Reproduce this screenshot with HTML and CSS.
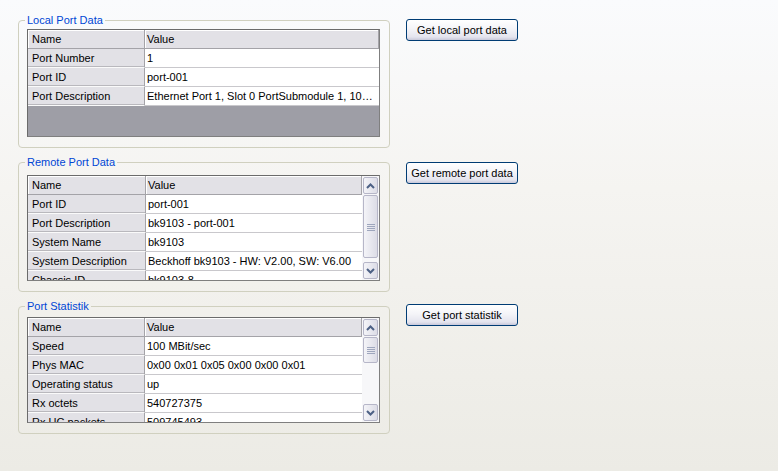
FILE: index.html
```html
<!DOCTYPE html>
<html lang="en">
<head>
    <meta charset="UTF-8">
    <title>Port Data</title>
    <link rel="stylesheet" href="styles.css">
</head>
<body>
    <div class="page">
        <fieldset class="group local">
            <legend>Local Port Data</legend>
            <div class="grid">
                <div class="view">
                    <table>
                        <tr><th class="name">Name</th><th>Value</th></tr>
                        <tr><td class="name">Port Number</td><td>1</td></tr>
                        <tr><td class="name">Port ID</td><td>port-001</td></tr>
                        <tr><td class="name">Port Description</td><td>Ethernet Port 1, Slot 0 PortSubmodule 1, 10…</td></tr>
                    </table>
                </div>
            </div>
        </fieldset>
        <div class="side"><button class="btn">Get local port data</button></div>

        <fieldset class="group remote">
            <legend>Remote Port Data</legend>
            <div class="grid">
                <div class="view">
                    <table>
                        <tr><th class="name">Name</th><th>Value</th></tr>
                        <tr><td class="name">Port ID</td><td>port-001</td></tr>
                        <tr><td class="name">Port Description</td><td>bk9103 - port-001</td></tr>
                        <tr><td class="name">System Name</td><td>bk9103</td></tr>
                        <tr><td class="name">System Description</td><td>Beckhoff bk9103 - HW: V2.00, SW: V6.00</td></tr>
                        <tr><td class="name">Chassis ID</td><td>bk9103-8</td></tr>
                    </table>
                </div>
                <div class="scrollbar">
                    <div class="sb-btn">
                        <svg width="9" height="6" viewBox="0 0 9 6"><path d="M1 5 L4.5 1.5 L8 5" fill="none" stroke="#4d6185" stroke-width="2"/></svg>
                    </div>
                    <div class="sb-track">
                        <div class="sb-thumb tall">
                            <svg width="8" height="8" viewBox="0 0 8 8"><path d="M0 1.5H8M0 3.5H8M0 5.5H8M0 7.5H8" stroke="#9ea6bd" stroke-width="1"/></svg>
                        </div>
                    </div>
                    <div class="sb-btn">
                        <svg width="9" height="6" viewBox="0 0 9 6"><path d="M1 1 L4.5 4.5 L8 1" fill="none" stroke="#4d6185" stroke-width="2"/></svg>
                    </div>
                </div>
            </div>
        </fieldset>
        <div class="side"><button class="btn">Get remote port data</button></div>

        <fieldset class="group stats">
            <legend>Port Statistik</legend>
            <div class="grid">
                <div class="view">
                    <table>
                        <tr><th class="name">Name</th><th>Value</th></tr>
                        <tr><td class="name">Speed</td><td>100 MBit/sec</td></tr>
                        <tr><td class="name">Phys MAC</td><td>0x00 0x01 0x05 0x00 0x00 0x01</td></tr>
                        <tr><td class="name">Operating status</td><td>up</td></tr>
                        <tr><td class="name">Rx octets</td><td>540727375</td></tr>
                        <tr><td class="name">Rx UC packets</td><td>509745493</td></tr>
                    </table>
                </div>
                <div class="scrollbar">
                    <div class="sb-btn">
                        <svg width="9" height="6" viewBox="0 0 9 6"><path d="M1 5 L4.5 1.5 L8 5" fill="none" stroke="#4d6185" stroke-width="2"/></svg>
                    </div>
                    <div class="sb-track">
                        <div class="sb-thumb short">
                            <svg width="8" height="8" viewBox="0 0 8 8"><path d="M0 1.5H8M0 3.5H8M0 5.5H8M0 7.5H8" stroke="#9ea6bd" stroke-width="1"/></svg>
                        </div>
                    </div>
                    <div class="sb-btn">
                        <svg width="9" height="6" viewBox="0 0 9 6"><path d="M1 1 L4.5 4.5 L8 1" fill="none" stroke="#4d6185" stroke-width="2"/></svg>
                    </div>
                </div>
            </div>
        </fieldset>
        <div class="side"><button class="btn">Get port statistik</button></div>
    </div>
</body>
</html>
```

FILE: styles.css
```css
html, body {
    height: 100%;
}

body {
    margin: 0;
    font-family: "Liberation Sans", Arial, sans-serif;
    font-size: 11px;
    color: #000;
    background: linear-gradient(to bottom, #fafbfd 0%, #f5f4f1 40%, #ecebe5 100%);
}

.page {
    display: grid;
    grid-template-columns: 372px 112px;
    column-gap: 16px;
    padding: 14px 0 0 18px;
}

.group {
    margin: 0;
    padding: 3px 9px 10px 8px;
    border: 1px solid #d0d0bf;
    border-radius: 4px;
    min-width: 0;
}

.group legend {
    color: #0046d5;
    font-size: 11px;
    line-height: 12px;
    padding: 0 2px;
    margin-left: -2px;
}

.remote, .stats {
    margin-top: 8px;
}

.remote {
    padding-top: 7px;
}

.stats {
    padding-top: 5px;
}

.side {
    padding-top: 5px;
}

.remote + .side {
    padding-top: 14px;
}

.stats + .side {
    padding-top: 12px;
}

.btn {
    width: 112px;
    height: 22px;
    padding: 0;
    font-family: inherit;
    font-size: 11px;
    color: #000;
    border: 1px solid #003c74;
    border-radius: 3px;
    background: linear-gradient(to bottom, #ffffff 0%, #f4f4f8 45%, #e4e4ee 85%, #c8c8da 100%);
}

.grid {
    display: flex;
    height: 104px;
    border: 1px solid #7f7f7f;
    border-top-color: #6b6b6b;
    border-left-color: #6b6b6b;
    background: #fff;
}

.local .grid {
    height: 106px;
}

.view {
    flex: 1;
    overflow: hidden;
    background: #fff;
}

.local .view {
    background: #9e9ea6;
}

table {
    width: 100%;
    border-collapse: separate;
    border-spacing: 0;
    table-layout: fixed;
}

th, td {
    height: 18px;
    line-height: 18px;
    padding: 0 2px;
    text-align: left;
    font-weight: normal;
    white-space: nowrap;
    overflow: hidden;
    border-bottom: 1px solid #c9c8cc;
    background: #fff;
}

th {
    background: #e2e1e6;
    border-bottom: 1px solid #a4a3a8;
    border-right: 1px solid #a4a3a8;
    box-shadow: inset 1px 1px 0 #fff;
}

.name {
    width: 110px;
    padding-left: 4px;
    background: #e2e1e6;
    border-right: 1px solid #a4a3a8;
    border-bottom: 1px solid #fafafa;
    box-shadow: inset 0 -1px 0 #b9b8bd;
}

th.name {
    border-bottom: 1px solid #a4a3a8;
    box-shadow: inset 1px 1px 0 #fff;
}

.remote .name {
    width: 111px;
}

.scrollbar {
    width: 17px;
    display: flex;
    flex-direction: column;
    background: #f7f7f9;
}

.sb-btn {
    height: 15px;
    margin: 1px;
    display: flex;
    align-items: center;
    justify-content: center;
    border: 1px solid #b6b6c8;
    border-radius: 2px;
    background: linear-gradient(to right, #f4f4f8, #dcdce6);
}

.sb-track {
    flex: 1;
}

.sb-thumb {
    margin: 0 1px;
    display: flex;
    align-items: center;
    justify-content: center;
    border: 1px solid #b6b6c8;
    border-radius: 2px;
    background: linear-gradient(to right, #f4f4f8, #dcdce6);
}

.sb-thumb.tall {
    height: 61px;
}

.sb-thumb.short {
    height: 24px;
}
```
